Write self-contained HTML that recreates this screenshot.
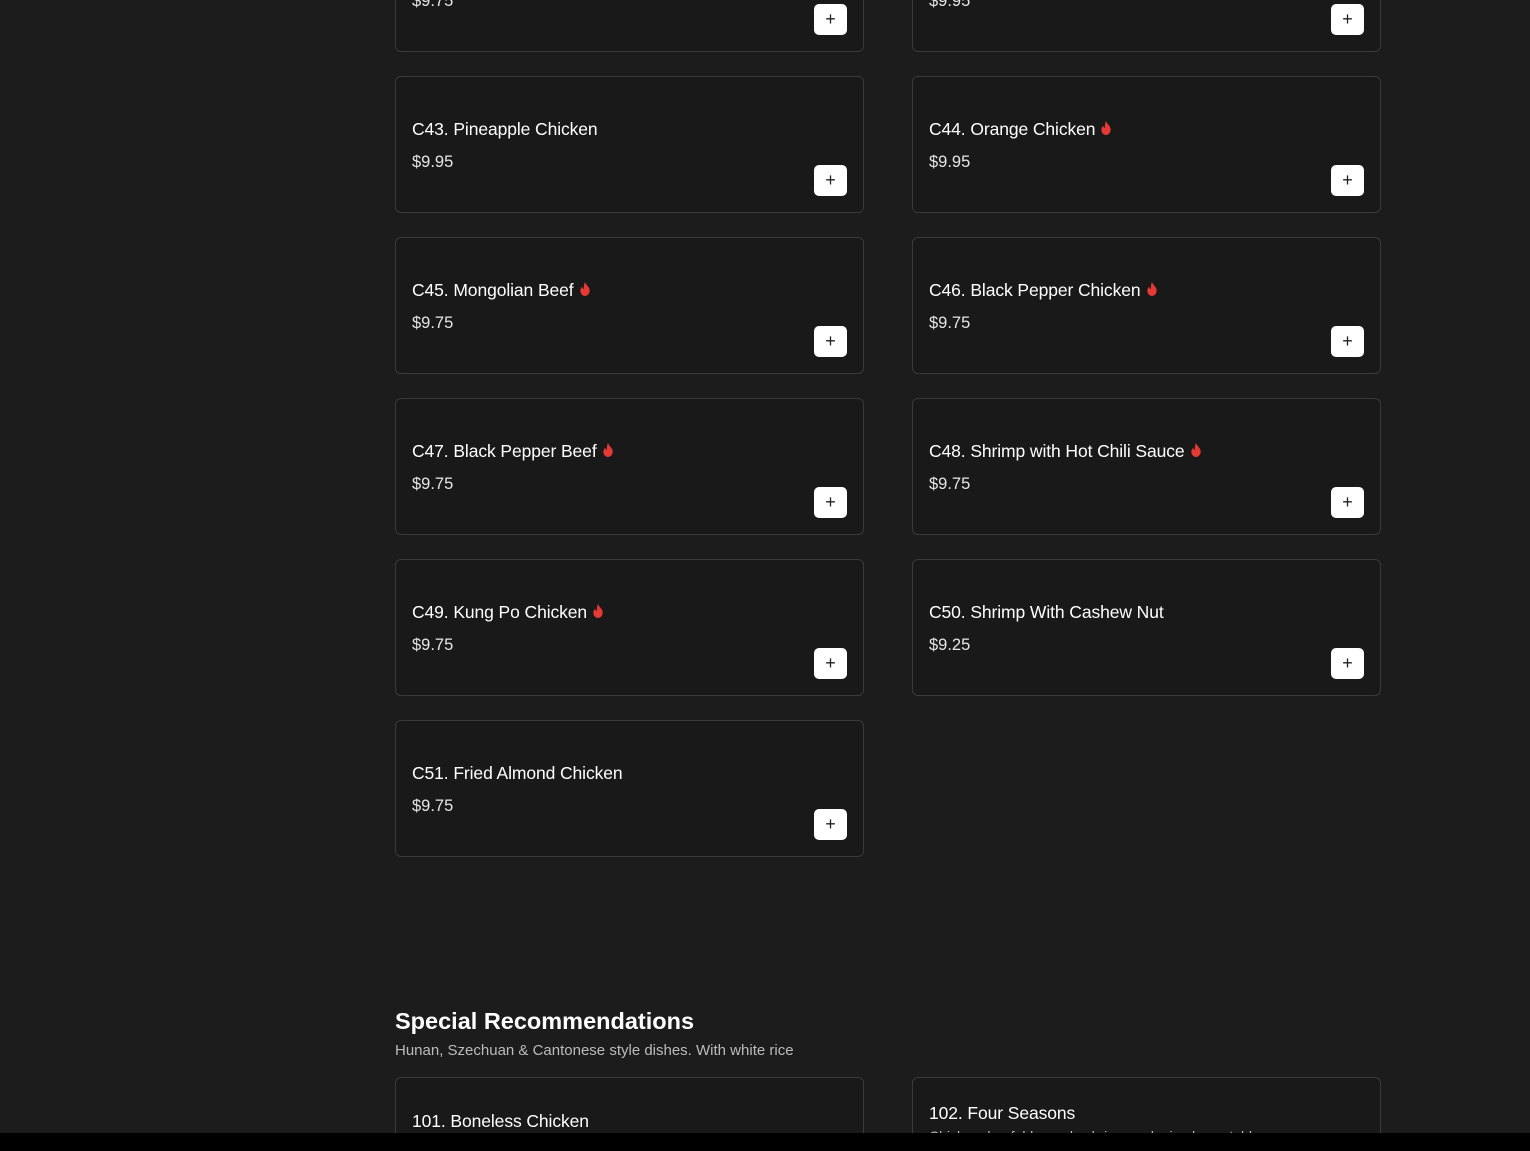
<!DOCTYPE html><html><head><style>
html,body{margin:0;width:1530px;height:1151px;overflow:hidden}
body{background:#1c1c1c;position:relative;font-family:"Liberation Sans",sans-serif;color:#fff}
.c{position:absolute;width:469px;height:137px;border:1px solid #3a3a3a;border-radius:6px;background:#191919;box-sizing:border-box}
.t{position:absolute;left:16px;top:42px;font-size:17.5px;letter-spacing:-0.1px;font-weight:500}
.p{position:absolute;left:16px;top:76px;font-size:16.5px;color:#e6e6e6}
.b{position:absolute;right:16px;top:88px;width:33px;height:31px;background:#fff;border-radius:5px;color:#222;font-size:18px;text-align:center;line-height:31px}
.f{display:inline-block;vertical-align:middle;margin-left:5px;margin-top:-4px}
.bar{position:absolute;left:0;top:1133px;width:1530px;height:18px;background:#000;z-index:5}
</style></head><body>
<svg width="0" height="0" style="position:absolute"><defs><symbol id="fl" viewBox="0 0 10 12"><path d="M5 0C6 3 9 4 9 7.5 9 10 7 12 5 12 3 12 1 10 1 7.5 1 6 2 5 2.5 4 3 5.5 3.5 6 4 6 4 4 4 2 5 0Z" fill="#e53935"/></symbol></defs></svg>
<div class="c" style="left:395px;top:-85px"><div class="t">C41.</div><div class="p">$9.75</div><div class="b">+</div></div>
<div class="c" style="left:912px;top:-85px"><div class="t">C42.</div><div class="p">$9.95</div><div class="b">+</div></div>
<div class="c" style="left:395px;top:76px"><div class="t">C43. Pineapple Chicken</div><div class="p">$9.95</div><div class="b">+</div></div>
<div class="c" style="left:912px;top:76px"><div class="t">C44. Orange Chicken<svg class="f" width="12" height="14"><use href="#fl"/></svg></div><div class="p">$9.95</div><div class="b">+</div></div>
<div class="c" style="left:395px;top:237px"><div class="t">C45. Mongolian Beef<svg class="f" width="12" height="14"><use href="#fl"/></svg></div><div class="p">$9.75</div><div class="b">+</div></div>
<div class="c" style="left:912px;top:237px"><div class="t">C46. Black Pepper Chicken<svg class="f" width="12" height="14"><use href="#fl"/></svg></div><div class="p">$9.75</div><div class="b">+</div></div>
<div class="c" style="left:395px;top:398px"><div class="t">C47. Black Pepper Beef<svg class="f" width="12" height="14"><use href="#fl"/></svg></div><div class="p">$9.75</div><div class="b">+</div></div>
<div class="c" style="left:912px;top:398px"><div class="t">C48. Shrimp with Hot Chili Sauce<svg class="f" width="12" height="14"><use href="#fl"/></svg></div><div class="p">$9.75</div><div class="b">+</div></div>
<div class="c" style="left:395px;top:559px"><div class="t">C49. Kung Po Chicken<svg class="f" width="12" height="14"><use href="#fl"/></svg></div><div class="p">$9.75</div><div class="b">+</div></div>
<div class="c" style="left:912px;top:559px"><div class="t">C50. Shrimp With Cashew Nut</div><div class="p">$9.25</div><div class="b">+</div></div>
<div class="c" style="left:395px;top:720px"><div class="t">C51. Fried Almond Chicken</div><div class="p">$9.75</div><div class="b">+</div></div>
<div style="position:absolute;left:395px;top:1008px;font-size:23.5px;font-weight:bold">Special Recommendations</div>
<div style="position:absolute;left:395px;top:1042px;font-size:15px;color:#bbb">Hunan, Szechuan &amp; Cantonese style dishes. With white rice</div>
<div class="c" style="left:395px;top:1077px;height:120px"><div class="t" style="top:33px">101. Boneless Chicken</div></div>
<div class="c" style="left:912px;top:1077px;height:120px"><div class="t" style="top:25px">102. Four Seasons</div><div class="p" style="top:50px;font-size:14px;color:#bbb">Chicken, beef, bbq pork, shrimp and mixed vegetables</div></div>
<div class="bar"></div>
</body></html>
